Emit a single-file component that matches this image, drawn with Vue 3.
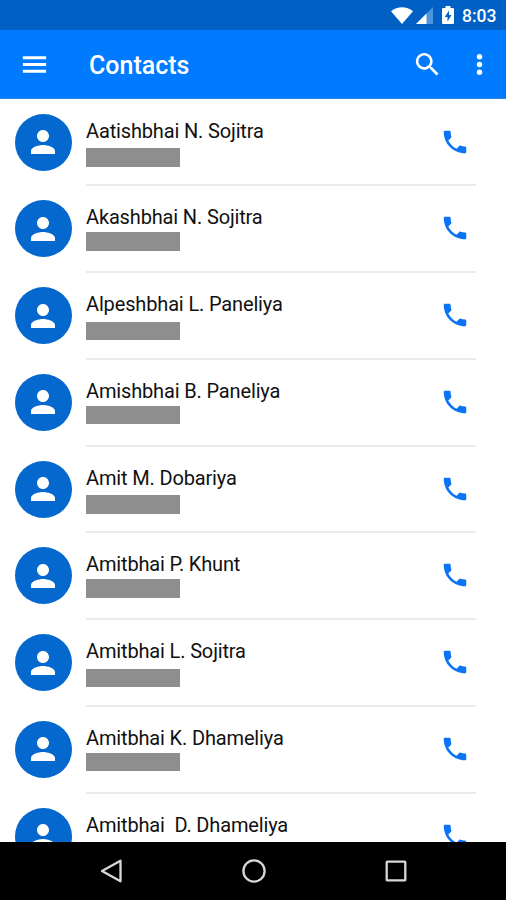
<template>
  <div class="phone">
    <div class="status-bar">
      <svg class="wifi" viewBox="0 0 22 17">
        <path d="M0 4.2C6.2-1.2 15.8-1.2 22 4.2L11 17z" fill="#fff" />
      </svg>
      <svg class="signal" viewBox="0 0 17 17">
        <path d="M0 17L17 0v17z" fill="#4e94df" />
        <path d="M0 17L10.500 6.500V17z" fill="#fff" />
      </svg>
      <svg class="battery" viewBox="0 0 12 18">
        <path d="M3.500 0h5v2H11a1 1 0 0 1 1 1v14a1 1 0 0 1-1 1H1a1 1 0 0 1-1-1V3a1 1 0 0 1 1-1h2.500z" fill="#fff" />
        <path d="M7 4.500L2.800 11h2.700v4.500L9.500 9H7z" fill="#0060c4" />
      </svg>
      <span class="clock">8:03</span>
    </div>

    <header class="app-bar">
      <button class="icon-button menu" aria-label="Menu">
        <svg viewBox="0 0 24 24"><path d="M3 18.300h18v-2.200H3v2.200zm0-5.200h18v-2.200H3v2.200zm0-7.400v2.200h18V5.700H3z" /></svg>
      </button>
      <h1>Contacts</h1>
      <button class="icon-button search" aria-label="Search">
        <svg viewBox="0 0 24 24">
          <path d="M15.500 14h-.79l-.28-.27C15.410 12.590 16 11.110 16 9.500 16 5.910 13.090 3 9.500 3S3 5.910 3 9.500 5.910 16 9.500 16c1.610 0 3.090-.59 4.230-1.570l.27.28v.79l5 4.990L20.490 19l-4.990-5zm-6 0C7.010 14 5 11.990 5 9.500S7.010 5 9.500 5 14 7.010 14 9.500 11.990 14 9.500 14z" />
        </svg>
      </button>
      <button class="icon-button" aria-label="More">
        <svg viewBox="0 0 24 24">
          <circle cx="12" cy="6" r="2.100" />
          <circle cx="12" cy="12" r="2.100" />
          <circle cx="12" cy="18" r="2.100" />
        </svg>
      </button>
    </header>

    <main class="contact-list">
      <div v-for="contact in contacts" :key="contact" class="contact">
        <div class="avatar">
          <svg viewBox="0 0 24 24">
            <path d="M12 12c2.210 0 4-1.790 4-4s-1.790-4-4-4-4 1.790-4 4 1.790 4 4 4zm0 2c-2.670 0-8 1.340-8 4v2h16v-2c0-2.660-5.330-4-8-4z" />
          </svg>
        </div>
        <div class="details">
          <div class="text">
            <div class="name">{{ contact }}</div>
            <div class="number"></div>
          </div>
          <svg class="call" viewBox="0 0 24 24">
            <path d="M6.620 10.790c1.440 2.830 3.760 5.140 6.590 6.590l2.200-2.200c.27-.27.67-.36 1.020-.24 1.120.37 2.330.57 3.570.57.55 0 1 .45 1 1V20c0 .55-.45 1-1 1-9.390 0-17-7.610-17-17 0-.55.45-1 1-1h3.500c.55 0 1 .45 1 1 0 1.250.2 2.450.57 3.570.11.35.03.74-.25 1.020l-2.200 2.200z" />
          </svg>
        </div>
      </div>
    </main>

    <nav class="nav-bar">
      <svg viewBox="0 0 24 24"><path d="M20.500 1.700v20.600L2 12z" /></svg>
      <svg viewBox="0 0 24 24"><circle cx="12" cy="12" r="10.600" /></svg>
      <svg viewBox="0 0 24 24"><rect x="2.700" y="2.700" width="18.600" height="18.600" rx="0.500" /></svg>
    </nav>
  </div>
</template>

<script setup>
import { ref } from 'vue';

const contacts = ref([
  'Aatishbhai N. Sojitra',
  'Akashbhai N. Sojitra',
  'Alpeshbhai L. Paneliya',
  'Amishbhai B. Paneliya',
  'Amit M. Dobariya',
  'Amitbhai P. Khunt',
  'Amitbhai L. Sojitra',
  'Amitbhai K. Dhameliya',
  'Amitbhai  D. Dhameliya'
]);
</script>

<style>
body {
  margin: 0;
}
</style>

<style scoped>
.phone {
  display: flex;
  flex-direction: column;
  width: 506px;
  height: 900px;
  overflow: hidden;
  background: #fff;
  font-family: Roboto, sans-serif;
}

.status-bar {
  display: flex;
  align-items: center;
  justify-content: flex-end;
  flex: none;
  height: 30px;
  padding-right: 9px;
  box-sizing: border-box;
  background: #0060c4;
  color: #fff;
}

.wifi {
  width: 22px;
  height: 17px;
  margin-right: 3px;
}

.signal {
  width: 17px;
  height: 17px;
  margin-right: 9px;
}

.battery {
  width: 12px;
  height: 18px;
  margin-right: 8px;
}

.clock {
  width: 35px;
  padding-top: 1px;
  font-size: 17.5px;
  font-weight: 500;
  line-height: 30px;
  white-space: nowrap;
}

.app-bar {
  display: flex;
  align-items: center;
  flex: none;
  height: 69px;
  padding: 0 11px 0 19px;
  box-sizing: border-box;
  background: #007aff;
  border-bottom: 1px solid #2b82e8;
  color: #fff;
}

.app-bar h1 {
  flex: 1;
  margin: 3px 0 0;
  font-size: 25px;
  font-weight: 500;
  line-height: 34px;
}

.icon-button {
  display: flex;
  padding: 0;
  border: none;
  background: none;
  cursor: pointer;
}

.icon-button svg {
  width: 31px;
  height: 31px;
  fill: #fff;
}

.menu {
  margin-right: 39px;
}

.search {
  margin-right: 21px;
}

.contact-list {
  flex: 1;
  min-height: 0;
  padding-top: 0.5px;
  overflow: hidden;
}

.contact {
  display: flex;
  height: 86.75px;
  padding: 0 30px 0 15px;
}

.avatar {
  display: flex;
  align-items: center;
  justify-content: center;
  flex: none;
  width: 57px;
  height: 57px;
  margin: 14px 14px 0 0;
  border-radius: 50%;
  background: #0468cf;
}

.avatar svg {
  width: 36px;
  height: 36px;
  margin-right: 1px;
  fill: #fff;
}

.details {
  display: flex;
  justify-content: space-between;
  flex: 1;
  box-sizing: border-box;
  border-bottom: 2px solid #ebebeb;
}

.name {
  margin-top: 18px;
  color: #111;
  font-size: 20px;
  letter-spacing: -0.15px;
  line-height: 26px;
  white-space: pre;
}

.number {
  width: 94px;
  height: 18.5px;
  margin-top: 4.5px;
  background: #8e8e8e;
}

.contact:nth-child(even) .number {
  margin-top: 2px;
}

.call {
  width: 30px;
  height: 30px;
  margin: 27px 6px 0 0;
  fill: #0a74f5;
}

.nav-bar {
  display: flex;
  align-items: center;
  justify-content: space-between;
  flex: none;
  height: 58px;
  padding: 0 98px 0 100px;
  box-sizing: border-box;
  background: #000;
}

.nav-bar svg {
  width: 24px;
  height: 24px;
  fill: none;
  stroke: #d8d8d8;
  stroke-width: 2.300;
  stroke-linejoin: round;
}
</style>
